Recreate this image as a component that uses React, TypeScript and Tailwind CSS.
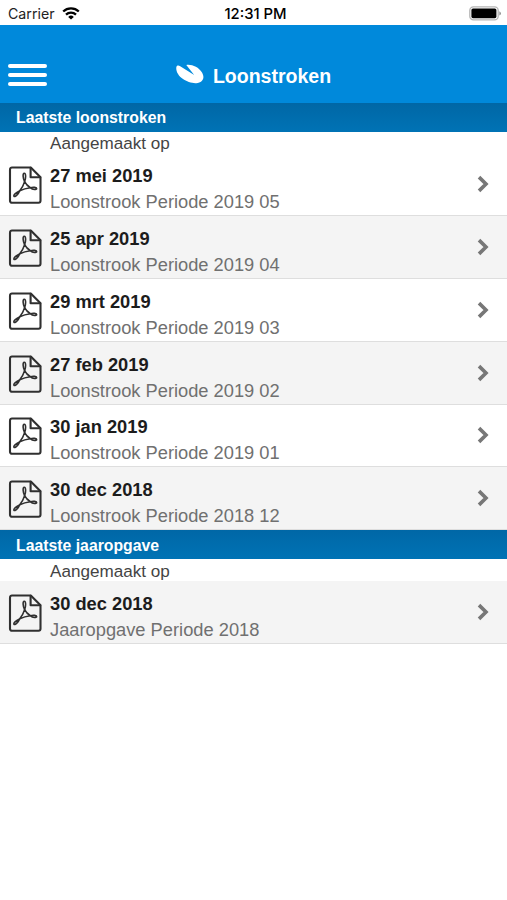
type Slip = {
  date: string;
  title: string;
  shaded: boolean;
};

const payslips: Slip[] = [
  { date: "27 mei 2019", title: "Loonstrook Periode 2019 05", shaded: false },
  { date: "25 apr 2019", title: "Loonstrook Periode 2019 04", shaded: true },
  { date: "29 mrt 2019", title: "Loonstrook Periode 2019 03", shaded: false },
  { date: "27 feb 2019", title: "Loonstrook Periode 2019 02", shaded: true },
  { date: "30 jan 2019", title: "Loonstrook Periode 2019 01", shaded: false },
  { date: "30 dec 2018", title: "Loonstrook Periode 2018 12", shaded: true },
];

const statements: Slip[] = [
  { date: "30 dec 2018", title: "Jaaropgave Periode 2018", shaded: true },
];

function WifiIcon() {
  return (
    <svg width="18" height="13" viewBox="0 0 18 13" fill="none" stroke="#000" strokeWidth="2.3">
      <path d="M1.2 4.5a11.2 11.2 0 0 1 15.6 0" />
      <path d="M4 7.6a7.2 7.2 0 0 1 10 0" />
      <path d="M9 12.6 6.2 9.9a4 4 0 0 1 5.6 0z" fill="#000" stroke="none" />
    </svg>
  );
}

function BatteryIcon() {
  return (
    <svg width="33" height="15" viewBox="0 0 33 15">
      <rect x="0.8" y="0.8" width="28.4" height="13" rx="3.6" fill="#fff" stroke="#b5b5b5" strokeWidth="1.3" />
      <rect x="2.4" y="2.4" width="25" height="9.8" rx="1.6" fill="#000" />
      <path d="M30.4 5.2q1.5.7 1.5 2.2t-1.5 2.2z" fill="#8a8a8a" />
    </svg>
  );
}

function Logo() {
  return (
    <svg className="mt-px" width="28" height="20" viewBox="0 0 28 20" fill="#fff">
      <path d="M.3 3.4C.6 1.500 2.200 1.100 4.200 2.300L18.200 11 10.300.9C16 .1 22.500 3 26 8.400c3.200 5.600.8 10.200-5.800 10.800C11.500 19.600-.6 12.500.3 3.400z" />
    </svg>
  );
}

function PdfIcon() {
  return (
    <svg width="34" height="38" viewBox="0 0 34 38" fill="none" stroke="#303030" strokeLinejoin="round" strokeLinecap="round">
      <path
        d="M4 1.500H22.800L32.500 11.200V34.800a2 2 0 0 1-2 2H4a2 2 0 0 1-2-2V3.500a2 2 0 0 1 2-2z"
        strokeWidth="2.100"
      />
      <path d="M22.600 1.800V11.300H32.200" strokeWidth="2.100" />
      <g strokeWidth="1.600">
        {/* top, lower left and right loops around the middle triangle */}
        <path d="M16.600 15.600C14.900 12.500 14.500 7.200 16.300 7.200S17.900 12.500 16.600 15.600z" />
        <path d="M11.600 24.900C8.500 26.200 5.200 29.200 6 30.300S10.200 28.700 11.600 24.900z" />
        <path d="M22.400 21.700C25.200 20.900 28.800 21.300 28.700 22.600S24.800 24 22.400 21.700z" />
        <path d="M16.600 15.600Q15.100 20.800 11.600 24.900Q16.600 22.300 22.400 21.700Q18.600 19.400 16.600 15.600z" />
      </g>
    </svg>
  );
}

function Chevron() {
  return (
    <svg className="mb-0.5" width="13" height="18" viewBox="0 0 13 18" fill="none" stroke="#777" strokeWidth="3.600">
      <path d="M2 2.100 9 9 2 15.900" />
    </svg>
  );
}

function SlipRow({ slip }: { slip: Slip }) {
  return (
    <li
      className={`flex h-[62.75px] items-center border-b border-[#dedede] pl-2 pr-[17.5px] pt-0.5 ${
        slip.shaded ? "bg-[#f4f4f4]" : "bg-white"
      }`}
    >
      <PdfIcon />
      <div className="ml-2 flex-1 pt-2 text-[18.3px] leading-[26px]">
        <p className="font-bold text-[#1c1c1c]">{slip.date}</p>
        <p className="text-[#707070]">{slip.title}</p>
      </div>
      <Chevron />
    </li>
  );
}

function Section({ title, slips }: { title: string; slips: Slip[] }) {
  return (
    <section>
      <h2 className="flex h-[29px] items-center bg-linear-to-b from-[#0067a6] to-[#0073b5] pl-4 pt-0.5 text-[15.8px] font-bold text-white">
        {title}
      </h2>
      <p className="flex h-[22px] items-center pl-[50px] pt-[3px] text-[17.1px] text-[#444]">
        Aangemaakt op
      </p>
      <ul>
        {slips.map((slip) => (
          <SlipRow key={slip.title} slip={slip} />
        ))}
      </ul>
    </section>
  );
}

export default function App() {
  return (
    <div className="min-h-screen bg-white font-['Liberation_Sans',Arial,sans-serif]">
      <div className="grid h-[25px] grid-cols-3 items-center pl-2 pr-[5px] pt-0.5 font-[Inter,sans-serif] text-[14.2px]">
        <div className="flex items-center gap-[7px] text-[#222]">
          Carrier
          <WifiIcon />
        </div>
        <div className="pt-px pl-px text-center text-[14.8px] font-medium text-black">12:31 PM</div>
        <div className="flex justify-end">
          <BatteryIcon />
        </div>
      </div>
      <header className="grid h-[77.5px] grid-cols-[48px_1fr_48px] bg-[#0089db] pt-[38px]">
        <button className="ml-2 mt-px flex h-[22px] w-[39px] flex-col justify-between" aria-label="Menu">
          <span className="h-1 w-full rounded-full bg-white" />
          <span className="h-1 w-full rounded-full bg-white" />
          <span className="h-1 w-full rounded-full bg-white" />
        </button>
        <div className="flex justify-center gap-[9px]">
          <Logo />
          <h1 className="text-[19.5px] font-bold leading-[26px] text-white">Loonstroken</h1>
        </div>
      </header>
      <main>
        <Section title="Laatste loonstroken" slips={payslips} />
        <Section title="Laatste jaaropgave" slips={statements} />
      </main>
    </div>
  );
}
